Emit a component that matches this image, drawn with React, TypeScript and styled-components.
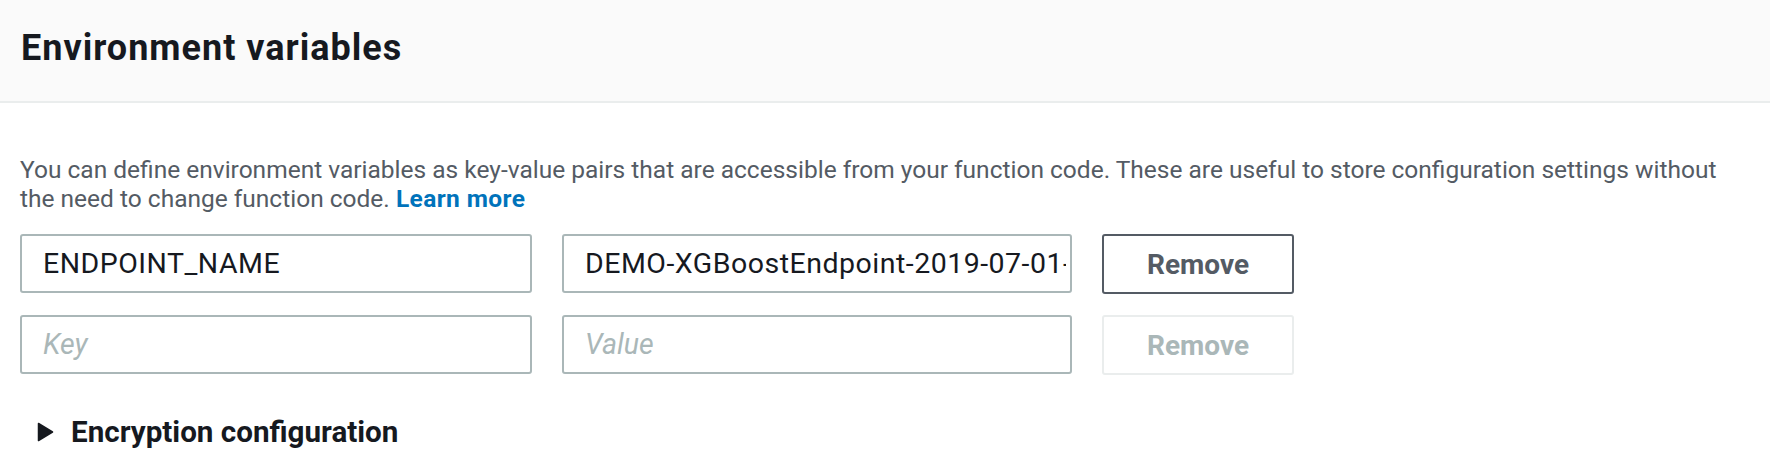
import { createGlobalStyle, styled } from 'styled-components';

const FONT = 'Roboto, "Liberation Sans", sans-serif';

const GlobalStyle = createGlobalStyle`
  html, body {
    margin: 0;
    padding: 0;
    background: #ffffff;
  }

  body {
    font-family: ${FONT};
    color: #16191f;
  }

  * {
    box-sizing: border-box;
  }
`;

interface EnvVar {
  key: string;
  value: string;
}

const VARIABLES: EnvVar[] = [
  { key: 'ENDPOINT_NAME', value: 'DEMO-XGBoostEndpoint-2019-07-01-21-23-54' },
  { key: '', value: '' },
];

function App() {
  return (
    <>
      <GlobalStyle />
      <StyledPanel>
        <StyledHeader>
          <StyledTitle>Environment variables</StyledTitle>
        </StyledHeader>
        <StyledBody>
          <StyledDescription>
            You can define environment variables as key-value pairs that are
            accessible from your function code. These are useful to store
            configuration settings without the need to change function code.{' '}
            <StyledLink href="#">Learn more</StyledLink>
          </StyledDescription>
          <StyledRows>
            {VARIABLES.map((item, index) => {
              const empty = item.key === '' && item.value === '';
              return (
                <StyledRow key={index}>
                  <StyledInput
                    type="text"
                    placeholder="Key"
                    defaultValue={item.key}
                    readOnly
                  />
                  <StyledInput
                    type="text"
                    placeholder="Value"
                    defaultValue={item.value}
                    readOnly
                  />
                  <RemoveButton type="button" disabled={empty}>
                    Remove
                  </RemoveButton>
                </StyledRow>
              );
            })}
          </StyledRows>
          <StyledExpander>
            <svg width="17" height="20" viewBox="0 0 17 20" aria-hidden="true">
              <path
                d="M1.5 1.5 L15.5 10 L1.5 18.5 Z"
                fill="#16191f"
                stroke="#16191f"
                strokeWidth="1.5"
                strokeLinejoin="round"
              />
            </svg>
            <span>Encryption configuration</span>
          </StyledExpander>
        </StyledBody>
      </StyledPanel>
    </>
  );
}

export default App;

const StyledPanel = styled.section`
  width: 1770px;
  height: 458px;
  overflow: hidden;
  background: #ffffff;
`;

const StyledHeader = styled.header`
  display: flex;
  align-items: center;

  height: 103px;
  padding: 0 21px;

  background: #fafafa;
  border-bottom: 2px solid #eaeded;
`;

const StyledTitle = styled.h2`
  margin: 0;
  padding-bottom: 6px;

  font-size: 36px;
  font-weight: 700;
  letter-spacing: 1px;
  color: #16191f;
`;

const StyledBody = styled.div`
  display: flex;
  flex-direction: column;

  padding: 52px 20px 0;
`;

const StyledDescription = styled.p`
  margin: 0;

  font-size: 24.5px;
  line-height: 29px;
  color: #545b64;
`;

const StyledLink = styled.a`
  color: #0073bb;
  font-weight: 700;
  letter-spacing: 0.4px;
  text-decoration: none;
`;

const StyledRows = styled.div`
  display: flex;
  flex-direction: column;
  gap: 21px;

  margin-top: 21px;
`;

const StyledRow = styled.div`
  display: grid;
  grid-template-columns: 512px 510px 192px;
  gap: 30px;
`;

const StyledInput = styled.input`
  height: 59px;
  padding: 0 4px 0 21px;

  font-family: ${FONT};
  font-size: 28.5px;
  letter-spacing: 0.5px;
  color: #16191f;

  border: 2px solid #aab7b8;
  border-radius: 3px;
  background: #ffffff;
  outline: none;

  &::placeholder {
    color: #aab7b8;
    font-style: italic;
    letter-spacing: 0;
  }
`;

const RemoveButton = styled.button`
  height: 60px;

  font-family: ${FONT};
  font-size: 28px;
  font-weight: 700;
  color: #545b64;

  border: 2px solid #545b64;
  border-radius: 3px;
  background: #ffffff;

  &:disabled {
    color: #aab7b8;
    border-color: #eaeded;
  }
`;

const StyledExpander = styled.div`
  display: flex;
  align-items: center;
  gap: 17px;

  margin-top: 40px;
  padding-left: 17px;

  font-size: 29.6px;
  font-weight: 700;
  color: #16191f;
`;
